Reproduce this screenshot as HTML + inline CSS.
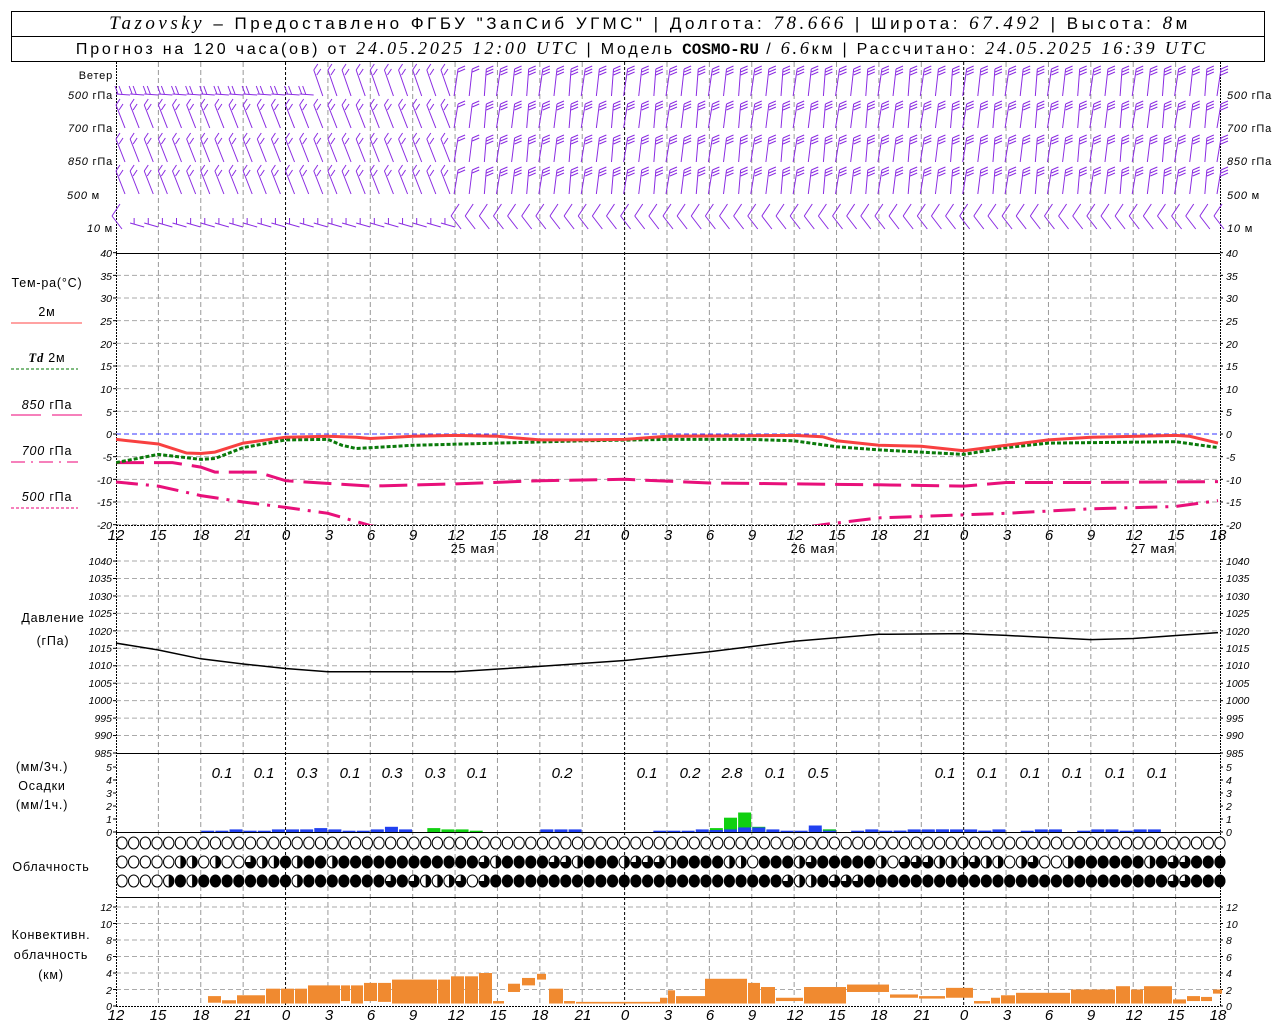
<!DOCTYPE html>
<html><head><meta charset="utf-8"><style>
html,body{margin:0;padding:0;background:#fff;width:1280px;height:1024px;overflow:hidden}
svg{display:block}
text{font-family:"Liberation Sans","DejaVu Sans",sans-serif;fill:#000}
.it{font-style:italic;font-family:"Liberation Serif",serif}
.tk{font-size:10.5px;font-style:italic}
.ax{font-size:15px;font-style:italic}
.lb{letter-spacing:0.8px}
</style></head><body>
<svg id="s" width="1280" height="1024" viewBox="0 0 1280 1024" xmlns="http://www.w3.org/2000/svg">
<rect x="11.5" y="11.5" width="1253" height="50" fill="none" stroke="#000"/>
<line x1="11" y1="36.5" x2="1265" y2="36.5" stroke="#000"/>
<text letter-spacing="3.5" x="650" y="29" text-anchor="middle" font-size="17"><tspan class="it" font-size="19">Tazovsky</tspan> – Предоставлено ФГБУ "ЗапСиб УГМС" | Долгота: <tspan class="it" font-size="19">78.666</tspan> | Широта: <tspan class="it" font-size="19">67.492</tspan> | Высота: <tspan class="it" font-size="19">8</tspan>м</text>
<text letter-spacing="2.8" x="642" y="54" text-anchor="middle" font-size="16">Прогноз на 120 часа(ов) от <tspan class="it" font-size="18">24.05.2025 12:00 UTC</tspan>  | Модель <tspan font-family="Liberation Mono" font-weight="bold" font-size="16" letter-spacing="0">COSMO-RU</tspan> / <tspan class="it" font-size="18">6.6</tspan>км | Рассчитано: <tspan class="it" font-size="18">24.05.2025 16:39 UTC</tspan></text>
<g id="grid"></g>
<g id="data"></g>
<g font-size="11" class="lb">
<text x="113" y="79" text-anchor="end">Ветер</text>
<text x="113" y="99" text-anchor="end"><tspan font-style="italic">500</tspan> гПа</text>
<text x="113" y="132" text-anchor="end"><tspan font-style="italic">700</tspan> гПа</text>
<text x="113" y="165" text-anchor="end"><tspan font-style="italic">850</tspan> гПа</text>
<text x="100" y="199" text-anchor="end"><tspan font-style="italic">500</tspan> м</text>
<text x="113" y="232" text-anchor="end"><tspan font-style="italic">10</tspan>    м</text>
<text x="1227" y="99"><tspan font-style="italic">500</tspan> гПа</text>
<text x="1227" y="132"><tspan font-style="italic">700</tspan> гПа</text>
<text x="1227" y="165"><tspan font-style="italic">850</tspan> гПа</text>
<text x="1227" y="199"><tspan font-style="italic">500</tspan> м</text>
<text x="1227" y="232"><tspan font-style="italic">10</tspan>    м</text>
</g>
<g font-size="12.5" class="lb">
<text x="47" y="287" text-anchor="middle">Тем-ра(°C)</text>
<text x="47" y="316" text-anchor="middle">2м</text>
<text x="47" y="362" text-anchor="middle"><tspan class="it" font-weight="bold">Td</tspan>  2м</text>
<text x="47" y="409" text-anchor="middle"><tspan font-style="italic">850</tspan> гПа</text>
<text x="47" y="455" text-anchor="middle"><tspan font-style="italic">700</tspan> гПа</text>
<text x="47" y="501" text-anchor="middle"><tspan font-style="italic">500</tspan> гПа</text>
<text x="53" y="622" text-anchor="middle">Давление</text>
<text x="53" y="645" text-anchor="middle">(гПа)</text>
<text x="42" y="771" text-anchor="middle">(мм/3ч.)</text>
<text x="42" y="790" text-anchor="middle">Осадки</text>
<text x="42" y="809" text-anchor="middle">(мм/1ч.)</text>
<text x="51" y="871" text-anchor="middle">Облачность</text>
<text x="51" y="939" text-anchor="middle">Конвективн.</text>
<text x="51" y="959" text-anchor="middle">облачность</text>
<text x="51" y="979" text-anchor="middle">(км)</text>
</g>
<line x1="11" y1="323" x2="82" y2="323" stroke="#f44" stroke-width="1"/>
<line x1="11" y1="369" x2="78" y2="369" stroke="#070" stroke-dasharray="3,2"/>
<line x1="11" y1="415" x2="41" y2="415" stroke="#e07"/><line x1="52" y1="415" x2="82" y2="415" stroke="#e07"/>
<line x1="11" y1="462" x2="78" y2="462" stroke="#e07" stroke-dasharray="14,6,2,6"/>
<line x1="11" y1="508" x2="78" y2="508" stroke="#e07" stroke-dasharray="3,2"/>
<g class="ax">
<text x="116" y="540" text-anchor="middle">12</text><text x="158" y="540" text-anchor="middle">15</text><text x="201" y="540" text-anchor="middle">18</text><text x="243" y="540" text-anchor="middle">21</text><text x="286" y="540" text-anchor="middle">0</text><text x="329" y="540" text-anchor="middle">3</text><text x="371" y="540" text-anchor="middle">6</text><text x="413" y="540" text-anchor="middle">9</text><text x="456" y="540" text-anchor="middle">12</text><text x="498" y="540" text-anchor="middle">15</text><text x="540" y="540" text-anchor="middle">18</text><text x="583" y="540" text-anchor="middle">21</text><text x="625" y="540" text-anchor="middle">0</text><text x="668" y="540" text-anchor="middle">3</text><text x="710" y="540" text-anchor="middle">6</text><text x="752" y="540" text-anchor="middle">9</text><text x="795" y="540" text-anchor="middle">12</text><text x="837" y="540" text-anchor="middle">15</text><text x="879" y="540" text-anchor="middle">18</text><text x="922" y="540" text-anchor="middle">21</text><text x="964" y="540" text-anchor="middle">0</text><text x="1007" y="540" text-anchor="middle">3</text><text x="1049" y="540" text-anchor="middle">6</text><text x="1091" y="540" text-anchor="middle">9</text><text x="1134" y="540" text-anchor="middle">12</text><text x="1176" y="540" text-anchor="middle">15</text><text x="1218" y="540" text-anchor="middle">18</text>
</g>
<g font-size="12.5" class="lb"><text x="473" y="553" text-anchor="middle">25 мая</text><text x="813" y="553" text-anchor="middle">26 мая</text><text x="1153" y="553" text-anchor="middle">27 мая</text></g>
<g class="ax">
<text x="116" y="1020" text-anchor="middle">12</text><text x="158" y="1020" text-anchor="middle">15</text><text x="201" y="1020" text-anchor="middle">18</text><text x="243" y="1020" text-anchor="middle">21</text><text x="286" y="1020" text-anchor="middle">0</text><text x="329" y="1020" text-anchor="middle">3</text><text x="371" y="1020" text-anchor="middle">6</text><text x="413" y="1020" text-anchor="middle">9</text><text x="456" y="1020" text-anchor="middle">12</text><text x="498" y="1020" text-anchor="middle">15</text><text x="540" y="1020" text-anchor="middle">18</text><text x="583" y="1020" text-anchor="middle">21</text><text x="625" y="1020" text-anchor="middle">0</text><text x="668" y="1020" text-anchor="middle">3</text><text x="710" y="1020" text-anchor="middle">6</text><text x="752" y="1020" text-anchor="middle">9</text><text x="795" y="1020" text-anchor="middle">12</text><text x="837" y="1020" text-anchor="middle">15</text><text x="879" y="1020" text-anchor="middle">18</text><text x="922" y="1020" text-anchor="middle">21</text><text x="964" y="1020" text-anchor="middle">0</text><text x="1007" y="1020" text-anchor="middle">3</text><text x="1049" y="1020" text-anchor="middle">6</text><text x="1091" y="1020" text-anchor="middle">9</text><text x="1134" y="1020" text-anchor="middle">12</text><text x="1176" y="1020" text-anchor="middle">15</text><text x="1218" y="1020" text-anchor="middle">18</text>
</g>
<g class="ax" font-size="14" text-anchor="middle">
<text x="222" y="778">0.1</text><text x="264" y="778">0.1</text><text x="307" y="778">0.3</text><text x="350" y="778">0.1</text><text x="392" y="778">0.3</text><text x="435" y="778">0.3</text><text x="477" y="778">0.1</text><text x="562" y="778">0.2</text><text x="647" y="778">0.1</text><text x="690" y="778">0.2</text><text x="732" y="778">2.8</text><text x="775" y="778">0.1</text><text x="818" y="778">0.5</text><text x="945" y="778">0.1</text><text x="987" y="778">0.1</text><text x="1030" y="778">0.1</text><text x="1072" y="778">0.1</text><text x="1115" y="778">0.1</text><text x="1157" y="778">0.1</text>
</g>
<g class="tk">
<text x="112" y="257" text-anchor="end">40</text><text x="112" y="280" text-anchor="end">35</text><text x="112" y="302" text-anchor="end">30</text><text x="112" y="325" text-anchor="end">25</text><text x="112" y="348" text-anchor="end">20</text><text x="112" y="370" text-anchor="end">15</text><text x="112" y="393" text-anchor="end">10</text><text x="112" y="416" text-anchor="end">5</text><text x="112" y="438" text-anchor="end">0</text><text x="112" y="461" text-anchor="end">-5</text><text x="112" y="484" text-anchor="end">-10</text><text x="112" y="506" text-anchor="end">-15</text><text x="112" y="529" text-anchor="end">-20</text>
<text x="1226" y="257">40</text><text x="1226" y="280">35</text><text x="1226" y="302">30</text><text x="1226" y="325">25</text><text x="1226" y="348">20</text><text x="1226" y="370">15</text><text x="1226" y="393">10</text><text x="1226" y="416">5</text><text x="1226" y="438">0</text><text x="1226" y="461">-5</text><text x="1226" y="484">-10</text><text x="1226" y="506">-15</text><text x="1226" y="529">-20</text>
<text x="112" y="565" text-anchor="end">1040</text><text x="112" y="582" text-anchor="end">1035</text><text x="112" y="600" text-anchor="end">1030</text><text x="112" y="617" text-anchor="end">1025</text><text x="112" y="635" text-anchor="end">1020</text><text x="112" y="652" text-anchor="end">1015</text><text x="112" y="669" text-anchor="end">1010</text><text x="112" y="687" text-anchor="end">1005</text><text x="112" y="704" text-anchor="end">1000</text><text x="112" y="722" text-anchor="end">995</text><text x="112" y="739" text-anchor="end">990</text><text x="112" y="757" text-anchor="end">985</text>
<text x="1226" y="565">1040</text><text x="1226" y="582">1035</text><text x="1226" y="600">1030</text><text x="1226" y="617">1025</text><text x="1226" y="635">1020</text><text x="1226" y="652">1015</text><text x="1226" y="669">1010</text><text x="1226" y="687">1005</text><text x="1226" y="704">1000</text><text x="1226" y="722">995</text><text x="1226" y="739">990</text><text x="1226" y="757">985</text>
<text x="112" y="771" text-anchor="end">5</text><text x="112" y="784" text-anchor="end">4</text><text x="112" y="797" text-anchor="end">3</text><text x="112" y="810" text-anchor="end">2</text><text x="112" y="823" text-anchor="end">1</text><text x="112" y="836" text-anchor="end">0</text>
<text x="1226" y="771">5</text><text x="1226" y="784">4</text><text x="1226" y="797">3</text><text x="1226" y="810">2</text><text x="1226" y="823">1</text><text x="1226" y="836">0</text>
<text x="112" y="911" text-anchor="end">12</text><text x="112" y="928" text-anchor="end">10</text><text x="112" y="944" text-anchor="end">8</text><text x="112" y="961" text-anchor="end">6</text><text x="112" y="977" text-anchor="end">4</text><text x="112" y="994" text-anchor="end">2</text><text x="112" y="1010" text-anchor="end">0</text>
<text x="1226" y="911">12</text><text x="1226" y="928">10</text><text x="1226" y="944">8</text><text x="1226" y="961">6</text><text x="1226" y="977">4</text><text x="1226" y="994">2</text><text x="1226" y="1010">0</text>
</g>
</svg>
<script>
var NS="http://www.w3.org/2000/svg";
function el(p,t,a){var e=document.createElementNS(NS,t);for(var k in a)e.setAttribute(k,a[k]);p.appendChild(e);return e;}
var G=document.getElementById('grid'),D=document.getElementById('data');
function X(h){return 116+h*14.128;}
for(var h=0;h<=78;h+=3){var x=X(h);var day=(h==12||h==36||h==60);
 if(h==0||h==78)continue;
 el(G,'line',{x1:x,y1:62,x2:x,y2:1006,stroke:day?'#000':'#999','stroke-dasharray':day?'3,2':'5,3','stroke-width':1});}
for(var v=-20;v<=35;v+=5){var y=434-v*4.533;el(G,'line',{x1:116,y1:y,x2:1220,y2:y,stroke:v==0?'#33f':'#aaa','stroke-dasharray':'5,3'});}
for(var p=985;p<=1040;p+=5){var y=753-(p-985)*3.49;if(p>985)el(G,'line',{x1:116,y1:y,x2:1220,y2:y,stroke:'#aaa','stroke-dasharray':'5,3'});}
for(var k=2;k<=12;k+=2){var y=1006-k*8.25;el(G,'line',{x1:116,y1:y,x2:1220,y2:y,stroke:'#aaa','stroke-dasharray':'5,3'});}
el(G,'line',{x1:116.5,y1:62,x2:116.5,y2:1006,stroke:'#000','stroke-dasharray':'2,1'});
el(G,'line',{x1:1220.5,y1:62,x2:1220.5,y2:1006,stroke:'#000','stroke-dasharray':'2,1'});
[253.5,753.5,897.5].forEach(function(y){el(G,'line',{x1:116,y1:y,x2:1220,y2:y,stroke:'#000'});});
el(G,'line',{x1:116,y1:832.5,x2:1220,y2:832.5,stroke:'#000'});
el(G,'line',{x1:116,y1:1006.5,x2:1220,y2:1006.5,stroke:'#000','stroke-dasharray':'2,1'});
el(G,'line',{x1:116,y1:525.5,x2:1220,y2:525.5,stroke:'#000','stroke-dasharray':'2,1'});
function tks(ys){ys.forEach(function(y){el(G,'line',{x1:113,y1:y,x2:116,y2:y,stroke:'#000'});el(G,'line',{x1:1220,y1:y,x2:1223,y2:y,stroke:'#000'});});}
var a=[];for(var v=-20;v<=40;v+=5)a.push(434-v*4.533);tks(a);
a=[];for(var p=985;p<=1040;p+=5)a.push(753-(p-985)*3.49);tks(a);
a=[];for(var i=0;i<=5;i++)a.push(832-i*13);tks(a);
a=[];for(var k=0;k<=12;k+=2)a.push(1006-k*8.25);tks(a);
var rows=[[66,96],[101,128],[135,162],[167,194],[204,229]];
var C='#8a2be2';
for(var r=0;r<5;r++){for(var i=0;i<=78;i++){
 var x=X(i),t=rows[r][0],b=rows[r][1];
 var g=el(D,'g',{stroke:C,'stroke-width':1,fill:'none'});
 var early=i<24, nf=(i>25&&r<4)?3:2;
 if(r==0&&i<14){el(g,'line',{x1:x,y1:b-2,x2:x+14,y2:b-1});el(g,'line',{x1:x+2,y1:b-2,x2:x-1,y2:b-10});el(g,'line',{x1:x+6,y1:b-2,x2:x+3,y2:b-10});continue;}
 if(r==4&&i<24&&i>0){el(g,'line',{x1:x,y1:b-6,x2:x+14,y2:b-2});el(g,'line',{x1:x+4,y1:b-5,x2:x+4,y2:b-11});continue;}
 if(r==4){el(g,'line',{x1:x+4,y1:t,x2:x-4,y2:t+12});el(g,'line',{x1:x-4,y1:t+12,x2:x+6,y2:b});continue;}
 if(early){el(g,'line',{x1:x,y1:t+4,x2:x+9,y2:b});for(var f=0;f<nf;f++)el(g,'line',{x1:x+f*3,y1:t+4+f*5,x2:x+f*3+4,y2:t-2+f*5});}
 else{var dx=(i%3)-1;el(g,'line',{x1:x+3,y1:t+3,x2:x+dx,y2:b});for(var f=0;f<nf;f++)el(g,'line',{x1:x+3,y1:t+3+f*3,x2:x+10,y2:t+f*3});}
}}
function ty(v){return 434-v*4.533;}
function path(pts,fy){var d='';pts.forEach(function(p,i){d+=(i?'L':'M')+X(p[0]).toFixed(1)+','+fy(p[1]).toFixed(1);});return d;}
var cp=el(D,'clipPath',{id:'ct'});el(cp,'rect',{x:116,y:253,width:1104,height:272});
var tg=el(D,'g',{'clip-path':'url(#ct)',fill:'none'});
var T=[[0,-1.2],[3,-2.2],[5,-4.2],[6,-4.3],[7,-4],[9,-2],[12,-0.7],[15,-0.5],[17,-0.7],[18,-1],[21,-0.5],[24,-0.3],[27,-0.5],[30,-1.3],[33,-1.3],[36,-1.2],[39,-0.5],[48,-0.3],[50,-0.6],[51,-1.5],[54,-2.5],[57,-2.7],[60,-3.7],[63,-2.5],[66,-1.3],[69,-0.7],[75,-0.3],[76,-0.5],[78,-2]];
var Td=[[0,-6.3],[3,-4.5],[6,-5.6],[7,-5.4],[9,-3],[12,-1.3],[15,-1.2],[16,-2.5],[17,-3.2],[21,-2.5],[27,-2],[33,-1.5],[39,-1.2],[45,-1.2],[48,-1.5],[51,-2.8],[54,-3.5],[60,-4.5],[63,-3],[66,-2],[75,-1.7],[78,-3]];
var P85=[[0,-6.3],[4,-6.3],[6,-7.3],[7,-8.4],[10,-8.4],[12,-10.3],[18,-11.5],[24,-11],[30,-10.3],[36,-10],[42,-10.8],[54,-11.2],[60,-11.5],[63,-10.7],[69,-10.7],[78,-10.5]];
var P70=[[0,-10.6],[3,-11.5],[6,-13.6],[9,-15],[12,-16.2],[15,-17.5],[18,-20.2],[19,-21],[48,-21],[50,-20],[54,-18.5],[63,-17.5],[69,-16.5],[75,-16],[78,-14.7]];
el(tg,'path',{d:path(P85,ty),stroke:'#e8107a','stroke-width':3,'stroke-dasharray':'28,10'});
el(tg,'path',{d:path(P70,ty),stroke:'#e8107a','stroke-width':3,'stroke-dasharray':'22,8,3,8'});
el(tg,'path',{d:path(Td,ty),stroke:'#0a7a0a','stroke-width':3,'stroke-dasharray':'4,2'});
el(tg,'path',{d:path(T,ty),stroke:'#f84040','stroke-width':3});
function py(p){return 753-(p-985)*3.49;}
var PR=[[0,1016.5],[3,1014.5],[6,1012],[9,1010.5],[12,1009.2],[15,1008.3],[24,1008.3],[30,1009.8],[36,1011.5],[42,1014],[48,1017],[54,1019],[60,1019.2],[63,1018.7],[69,1017.5],[72,1017.8],[78,1019.5]];
el(D,'path',{d:path(PR,py),stroke:'#000','stroke-width':1.5,fill:'none'});
function pb(h,v,c){var y=832-v*13;el(D,'rect',{x:X(h)+0.5,y:y,width:13,height:832-y,fill:c});}
var B='#2040f0',Gr='#10d010';
[[6,.1],[7,.1],[8,.2],[9,.1],[10,.1],[11,.2],[12,.2],[13,.2],[14,.3],[15,.2],[16,.1],[17,.1],[18,.2],[19,.4],[20,.2],[30,.2],[31,.2],[32,.2],[38,.1],[39,.1],[40,.1],[41,.2],[42,.1],[46,.1],[47,.1],[48,.1],[49,.2],[50,.2],[52,.1],[53,.2],[54,.1],[55,.1],[56,.1],[57,.1],[58,.2],[59,.2],[60,.2],[61,.1]].forEach(function(b){pb(b[0],b[1],B);});
[[56,.1],[57,.2],[58,.2],[59,.2],[60,.1],[62,.1],[63,.2],[65,.1],[66,.2],[67,.2],[69,.1],[70,.2],[71,.2],[72,.1],[73,.2],[74,.2]].forEach(function(b){pb(b[0]-1,b[1],B);});
[[22,.3],[23,.2],[24,.2],[25,.1],[42,.3],[43,1.1],[44,1.5],[45,.4],[50,.2]].forEach(function(b){pb(b[0],b[1],Gr);});
pb(43,.2,B);pb(44,.35,B);pb(45,.35,B);pb(46,.2,B);pb(49,.5,B);pb(50,.1,B);pb(42,.15,B);
var r1='0'.repeat(95);
var r2='00000hh0h00qhhfhffhffffffffffffqhffffqqhfffhqqqhffffhh0fffhqfffffh0qqqhhhqhh0hq00hffffffhfqq'.padEnd(95,'f');
var r3='0000hfhffffffffhfffffffqfqhhhq0qfffffffffffffffffffffffffqhhfqqqffffffffffffffffffffffffffqq'.padEnd(95,'f');
[[843,r1],[862,r2],[881,r3]].forEach(function(rr){for(var i=0;i<95;i++){var cx=122+i*11.68,cy=rr[0],c=rr[1][i]||'0';
 if(c=='f'){el(D,'ellipse',{cx:cx,cy:cy,rx:5.6,ry:6.5,fill:'#000'});}
 else{el(D,'ellipse',{cx:cx,cy:cy,rx:5.2,ry:6,fill:'#fff',stroke:'#000','stroke-width':1});
  if(c=='h'){el(D,'path',{d:'M'+cx+','+(cy-6)+' A5.2,6 0 0,1 '+cx+','+(cy+6)+'Z',fill:'#000'});}
  if(c=='q'){el(D,'path',{d:'M'+cx+','+cy+'L'+cx+','+(cy-6)+' A5.2,6 0 1,1 '+(cx-5.2)+','+cy+'Z',fill:'#000'});}}
}});
var O='#f08a30';
[[208,221,1.2,0.4],[222,236,0.7,0.3],[237,265,1.3,0.3],[266,280,2.1,0.3],[281,294,2.1,0.3],[295,307,2.1,0.3],[308,340,2.5,0.3],[341,350,2.5,0.6],[351,363,2.5,0.3],[364,377,2.8,0.6],[378,391,2.8,0.5],[392,437,3.2,0.3],[438,450,3.2,0.3],[451,464,3.6,0.3],[465,478,3.6,0.3],[479,492,4.0,0.3],[493,504,0.6,0.3],[508,520,2.7,1.7],[522,535,3.4,2.5],[537,546,3.9,3.2],[549,563,2.1,0.3],[564,575,0.6,0.3],[576,660,0.5,0.3],[660,667,1.0,0.3],[668,675,1.9,0.3],[676,705,1.2,0.3],[705,747,3.3,0.3],[748,760,2.8,0.3],[761,775,2.3,0.3],[776,803,1.0,0.6],[804,846,2.3,0.3],[847,889,2.6,1.7],[890,918,1.4,1.0],[919,945,1.2,0.9],[946,973,2.2,1.0],[974,990,0.6,0.3],[991,1000,1.0,0.3],[1001,1015,1.3,0.3],[1016,1070,1.6,0.3],[1071,1115,2.0,0.3],[1116,1130,2.4,0.3],[1131,1143,2.0,0.3],[1144,1172,2.4,0.3],[1173,1186,0.8,0.3],[1187,1200,1.2,0.6],[1201,1212,1.1,0.6],[1213,1222,2.0,1.5]].forEach(function(b){
 var y1=1006-b[2]*8.25,y2=1006-b[3]*8.25;el(D,'rect',{x:b[0],y:y1,width:b[1]-b[0],height:y2-y1,fill:O});});
</script>
</body></html>
